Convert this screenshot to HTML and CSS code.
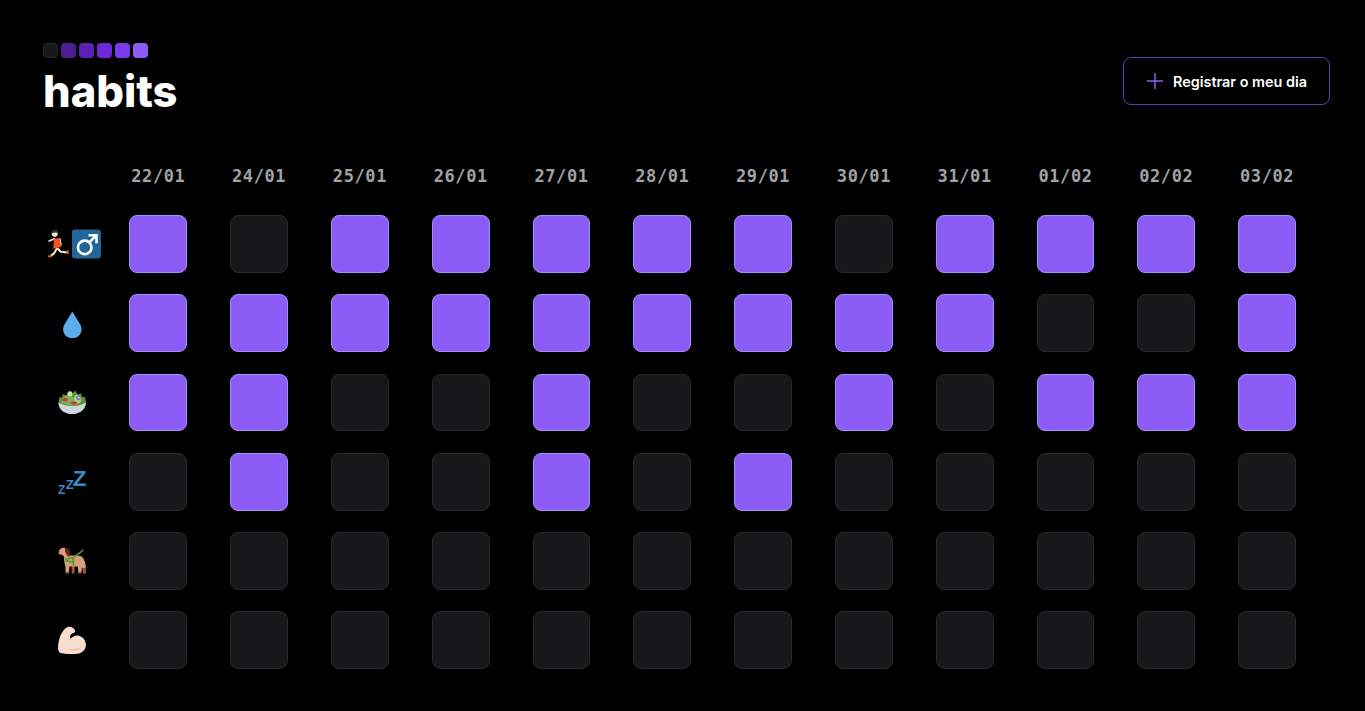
FILE: index.html
```html
<!DOCTYPE html>
<html>
<head>
    <title>habits</title>
    <link rel="stylesheet" href="styles.css">
</head>
<body>
    <header class="header">
        <div class="brand">
            <div class="logo">
                <span class="logo-dot dot-0"></span>
                <span class="logo-dot dot-1"></span>
                <span class="logo-dot dot-2"></span>
                <span class="logo-dot dot-3"></span>
                <span class="logo-dot dot-4"></span>
                <span class="logo-dot dot-5"></span>
            </div>
            <h1>habits</h1>
        </div>
        <button class="register">
            <svg width="20" height="20" viewBox="0 0 20 20"><path d="M10 2v16M2 10h16" stroke="#8b5cf6" stroke-width="1.5" fill="none"/></svg>
            Registrar o meu dia
        </button>
    </header>
    <div class="grid" id="grid"></div>

    <script>
        const dates = ['22/01','24/01','25/01','26/01','27/01','28/01','29/01','30/01','31/01','01/02','02/02','03/02'];

        // flat emoji, drawn on a 36x36 box
        const icons = {
            runner: '<path d="M14.4 11.6l-6.8 2.8" stroke="#F7DECE" stroke-width="2" fill="none" stroke-linecap="round"/>' +
                '<path d="M20.8 11.6l1.6 7.2" stroke="#F7DECE" stroke-width="2" fill="none" stroke-linecap="round"/>' +
                '<path d="M17.6 23l-4 6.6-4 3.2" stroke="#F7DECE" stroke-width="2.6" fill="none" stroke-linejoin="round"/>' +
                '<path d="M17.6 23l4.4 4.6 7.6.8" stroke="#F7DECE" stroke-width="2.6" fill="none" stroke-linejoin="round"/>' +
                '<path d="M13.6 11.6l7.2-.8 1.6 11-9.6 2z" fill="#F4511E"/>' +
                '<path d="M6.5 32l4.5.2-.4 2.4-4.5-.2zM29 26l2.6-.6.6 5-2.4.4z" fill="#D9572B"/>' +
                '<circle cx="14.6" cy="5.4" r="3.8" fill="#F7DECE"/>' +
                '<path d="M10.6 5c0-3 2-4.6 4.4-4.6s4.2 1.7 4.2 4.4c-2-1.4-5-1.6-8.6.2z" fill="#292F33"/>',
            male: '<rect width="36" height="36" rx="4" fill="#226699"/>' +
                '<circle cx="15.8" cy="22.2" r="8.4" fill="none" stroke="#fff" stroke-width="3.2"/>' +
                '<path d="M21.5 16L29 8.5M20.5 7.2h10v10" fill="none" stroke="#fff" stroke-width="3.2"/>',
            drop: '<path transform="translate(.4 1.2)" d="M27.5 18.5L18 3 8.5 18.5C7.4 20.3 7 22.3 7 24.5c0 6 4.9 10.5 11 10.5s11-4.5 11-10.5c0-2.2-.4-4.2-1.5-6z" fill="#5DADEC"/>',
            salad: '<path d="M1.6 18.5C1.6 27 9 32.5 18 32.5S34.8 27 34.8 18.5z" fill="#CCD6DD"/>' +
                '<path d="M2 18l1-6 3 .5 1-4 4 1.5 3-5 4 3 4-3.5 3 4.5 4-1.5 1 4.5 3.5 0 1.5 6c-4 3-9 5-16 5S5 21 2 18z" fill="#5C913B"/>' +
                '<path d="M5 19c1-5 4-9 9-9s9 5 11 12c-7 1-15 0-20-3z" fill="#77B255"/>' +
                '<path d="M22 10c3-1 7 1 7 5s-3 6-6 4-3-7-1-9z" fill="#A6D388"/>' +
                '<circle cx="15.6" cy="8" r="3" fill="#C6E5B3"/>' +
                '<path d="M6.5 14.5c2-2 5-1.5 6 0s-1 3.5-3 3-4-1.5-3-3zM16.5 19c2-2 6-2 7.5-.5l-1 2.5c-3 .5-6 0-6.5-2z" fill="#DD2E44"/>' +
                '<path d="M23.5 11c2-1 4.5-.5 5 1.5s-1.5 3.5-3.5 3-2.5-3.5-1.5-4.5z" fill="#9266CC"/>' +
                '<path d="M25 12.5c1-.8 2-.5 2.5.5-.8 1.2-1.8 1-2.5-.5z" fill="#E1E8ED"/>',
            zzz: '<text x="18.8" y="22.8" class="zed" font-size="27">Z</text>' +
                '<text x="10.4" y="26.4" class="zed" font-size="16">Z</text>' +
                '<text x="1.2" y="32.4" class="zed" font-size="14.5">Z</text>',
            dog: '<path d="M17.5 24h3.8l-.5 9h-3zM30 24h4.4l.4 9h-3.4z" fill="#A0573B"/>' +
                '<path d="M8.5 14c1-2 3-2.5 5-2.5h10c4 0 7 1 8.5 4 1.5 3 2.5 6 2.5 10.5h-4.5l-1 7h-3.400l-.6-8.500H15l-1 8.500h-3.600l-.4-9c-1-3.500-1.800-7-1.500-10z" fill="#D99E82"/>' +
                '<path d="M1.6 7.4C3 4 5 2.2 7.6 2.2c3.400 0 6.400 2.400 6.400 6 0 3-1.500 5.500-4 5.800-1.500.2-2-1.500-2.500-2.500-1-1-2-1.200-3.400-1.400-1.600 0-2.300-1-2.500-2.700z" fill="#D99E82"/>' +
                '<path d="M9.5 2.400c3.400-.6 6.400 1.600 6.600 5.400.2 2.600-.6 4.800-2.400 4.800-2.200-1-4.400-6-4.200-10.200z" fill="#662113"/>' +
                '<circle cx="2" cy="7.2" r="1" fill="#292F33"/>' +
                '<path d="M10.2 31.5h3.8V33h-3.8zM26.2 31.5h3.4V33h-3.4z" fill="#662113"/>' +
                '<path d="M9.6 15.8l10-2L31.6 5" stroke="#4F9E1F" stroke-width="1.8" fill="none"/>' +
                '<path d="M19.6 13.8l.2 9.5M10 17c3 1.6 6 2.4 10 1.8" stroke="#4F9E1F" stroke-width="2.2" fill="none"/>',
            arm: '<path d="M13.6 2.2c3-.6 7 1 8 4.5.5 2-1 3.5-3.5 3.5l-2 2c-.5 2-.5 3.5 0 4.5 3-3.5 7-5 11-3.6 5 1.8 8 6.4 7.5 11.9-.5 6-6 9.9-13 9.9-7 0-13-.2-17.5-1.4C1 32 .8 27 1.8 21.5 3 14 6.5 5 13.6 2.2z" fill="#F7DECE"/>' +
                '<path d="M9 28c5 2 13 2 18-1 2-1 3.5-3 4-5-.5 4-2 6.5-5 8-5 2-12 1-17-2z" fill="#EEC2AD"/>' +
                '<path d="M16 16.5c-1 1-1 2-.5 3" stroke="#EEC2AD" stroke-width="1" fill="none"/>'
        };

        const habits = [
            [['runner', 'male'], '101111101111'],
            [['drop'], '111111111001'],
            [['salad'], '110010010111'],
            [['zzz'], '010010100000'],
            [['dog'], '000000000000'],
            [['arm'], '000000000000']
        ];

        const grid = document.getElementById('grid');
        let html = '<span></span>';
        dates.forEach(d => { html += '<span class="date">' + d + '</span>'; });
        habits.forEach(h => {
            html += '<span class="emoji">';
            h[0].forEach(name => {
                html += '<svg width="30" height="30" viewBox="0 0 36 36">' + icons[name] + '</svg>';
            });
            html += '</span>';
            h[1].split('').forEach(v => {
                html += '<span class="cell-wrap"><span class="cell' + (v === '1' ? ' done' : '') + '"></span></span>';
            });
        });
        grid.innerHTML = html;
    </script>
</body>
</html>
```
FILE: styles.css
```css
* { box-sizing: border-box; }
body {
    margin: 0;
    height: 711px;
    overflow: hidden;
    background-color: #000;
    color: #fff;
    font-family: Inter, sans-serif;
    padding: 43px 35px 0 43px;
}
.header {
    display: flex;
    justify-content: space-between;
    align-items: center;
}
.logo { display: flex; gap: 3px; }
.logo-dot {
    width: 15px;
    height: 15px;
    border-radius: 4px;
}
.dot-0 { background-color: #18181b; border: 1px solid #27272a; }
.dot-1 { background-color: #4c1d95; }
.dot-2 { background-color: #5b21b6; }
.dot-3 { background-color: #6d28d9; }
.dot-4 { background-color: #7c3aed; }
.dot-5 { background-color: #8b5cf6; }
h1 {
    margin: 7px 0 0;
    font-size: 43.5px;
    line-height: 53px;
    font-weight: 800;
}
.register {
    display: flex;
    align-items: center;
    gap: 8px;
    height: 48px;
    margin-top: 1px;
    padding: 0 22px 0 21px;
    background: none;
    border: 1px solid #6039b5;
    border-radius: 8px;
    color: #fff;
    font-family: Inter, sans-serif;
    font-size: 14.4px;
    font-weight: 600;
}
.grid {
    display: grid;
    width: 1275px;
    grid-template-columns: 64.95px repeat(12, 100.8px);
    grid-template-rows: 40px repeat(6, 79.2px);
    margin-top: 46.5px;
}
.date {
    padding-top: 1.5px;
    text-align: center;
    font-family: "DejaVu Sans Mono", monospace;
    font-size: 17px;
    font-weight: 700;
    letter-spacing: 0.6px;
    color: #a1a1a6;
}
.emoji {
    display: flex;
    align-items: center;
    justify-content: center;
    padding-right: 7px;
}
.zed {
    font-family: "Liberation Sans", sans-serif;
    font-weight: 700;
    fill: #3B88C3;
}
.cell-wrap {
    display: flex;
    align-items: center;
    justify-content: center;
}
.cell {
    width: 57.8px;
    height: 57.8px;
    border-radius: 8px;
    background-color: #18181b;
    border: 1px solid #27272a;
}
.done {
    background-color: #8b5cf6;
    border-color: #a78bfa;
}
```
